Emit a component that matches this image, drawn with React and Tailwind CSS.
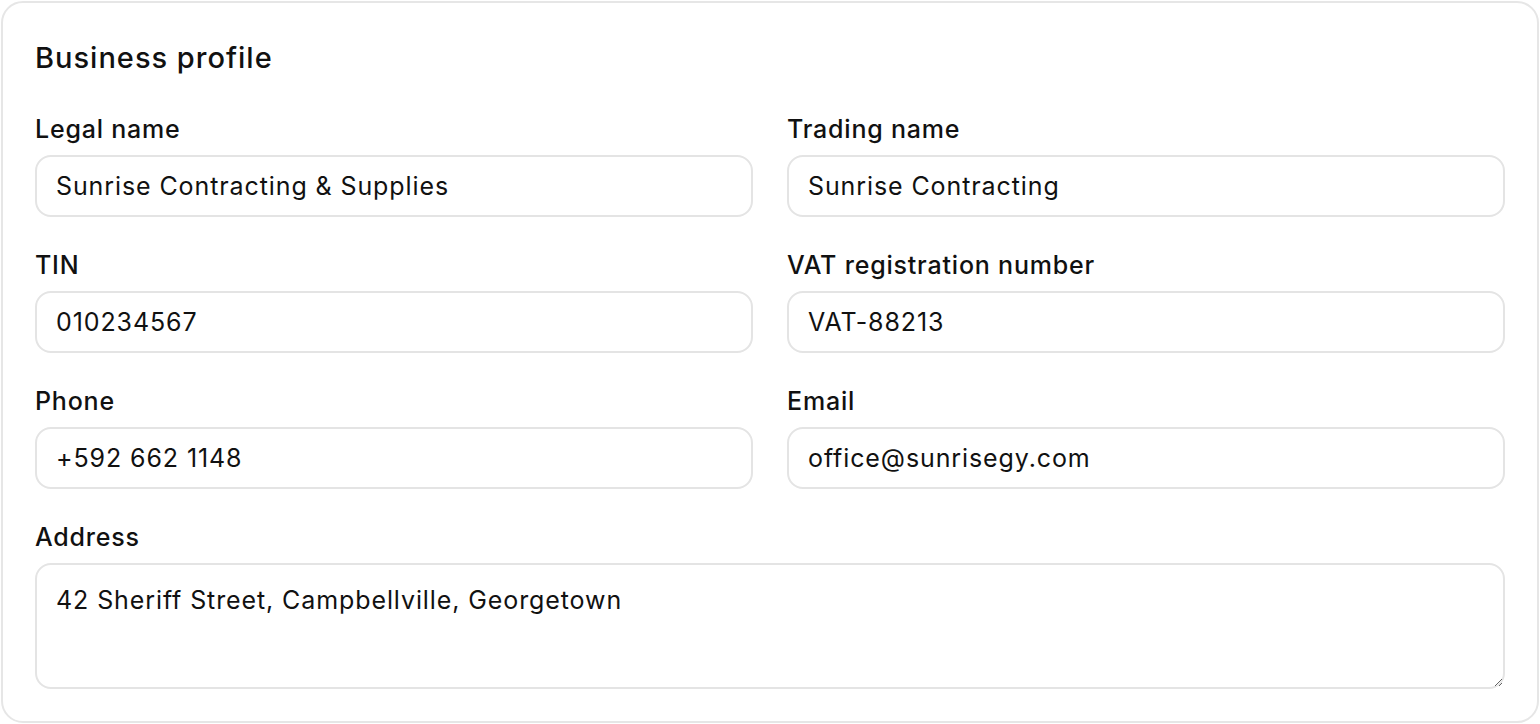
import { useState } from 'react';

const fields = [
  { label: 'Legal name', value: 'Sunrise Contracting & Supplies' },
  { label: 'Trading name', value: 'Sunrise Contracting' },
  { label: 'TIN', value: '010234567' },
  { label: 'VAT registration number', value: 'VAT-88213' },
  { label: 'Phone', value: '+592 662 1148' },
  { label: 'Email', value: 'office@sunrisegy.com' },
];

function Field({ label, value }) {
  const [val, setVal] = useState(value);
  return (
    <label className="flex flex-col gap-[11px]">
      <span className="text-[25px] leading-[30px] font-medium tracking-[0.8px] text-[#111]">{label}</span>
      <input
        value={val}
        onChange={(e) => setVal(e.target.value)}
        className="h-[62px] w-full rounded-[16px] border-2 border-[#e4e4e4] bg-white px-[19px] text-[25px] tracking-[0.9px] text-[#111] outline-none"
      />
    </label>
  );
}

export default function App() {
  const [address, setAddress] = useState('42 Sheriff Street, Campbellville, Georgetown');

  return (
    <div className="min-h-screen bg-white p-[1px] font-['Inter',sans-serif]">
      <div className="rounded-[22px] border-2 border-[#e6e6e6] bg-white px-[32px] pt-[38px] pb-[32px]">
        <h2 className="text-[29px] leading-[34px] font-medium tracking-[1px] text-[#111]">Business profile</h2>

        <div className="mt-[39px] grid grid-cols-2 gap-x-[34px] gap-y-[33px]">
          {fields.map((f) => (
            <Field key={f.label} label={f.label} value={f.value} />
          ))}

          <label className="col-span-2 flex flex-col gap-[11px]">
            <span className="text-[25px] leading-[30px] font-medium tracking-[0.8px] text-[#111]">Address</span>
            <textarea
              value={address}
              onChange={(e) => setAddress(e.target.value)}
              className="h-[126px] w-full rounded-[16px] border-2 border-[#e4e4e4] bg-white px-[19px] pt-[20px] text-[25px] leading-[30px] tracking-[0.9px] text-[#111] outline-none"
            />
          </label>
        </div>
      </div>
    </div>
  );
}
